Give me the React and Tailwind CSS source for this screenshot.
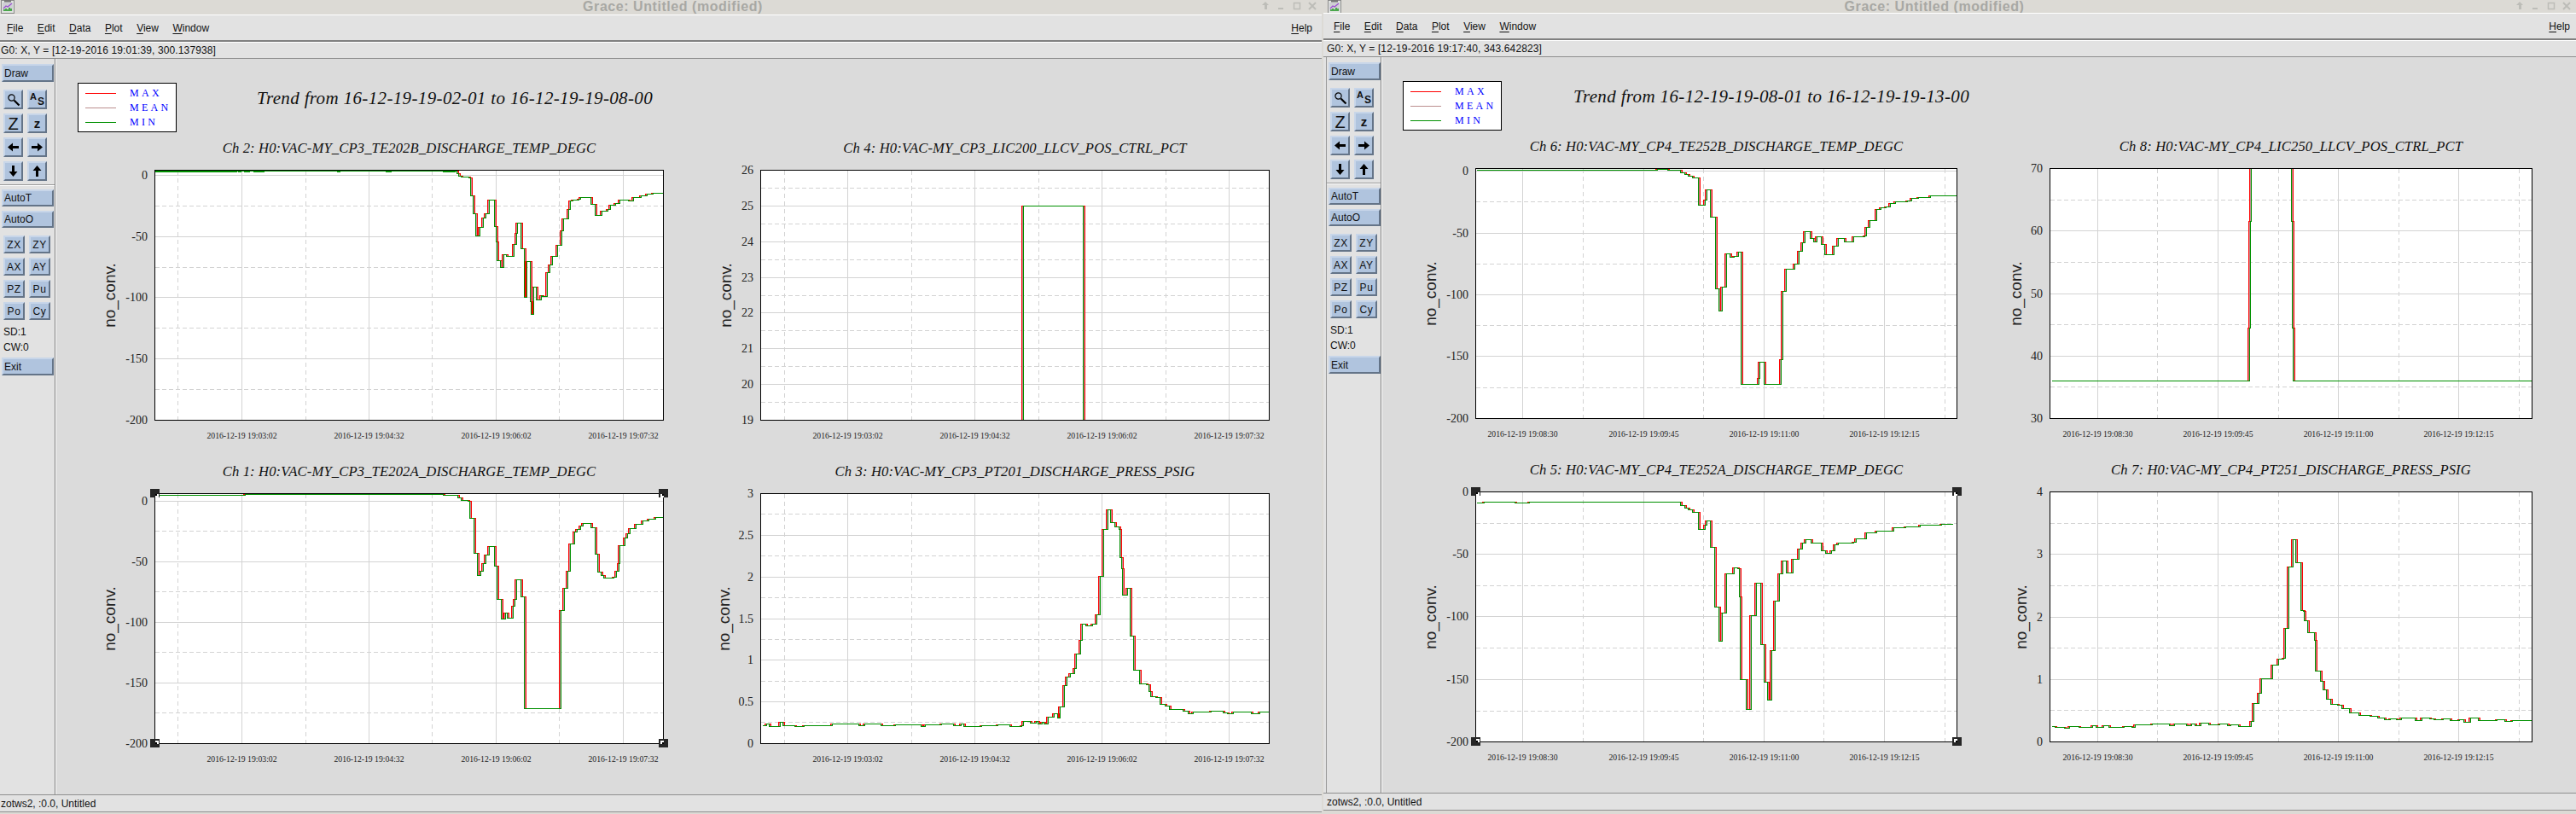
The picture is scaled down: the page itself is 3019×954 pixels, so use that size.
const SANS = "font-['Liberation_Sans',Arial,sans-serif]";
const SERIF = "font-['Liberation_Serif','Times_New_Roman',serif]";

const even = (n) => Array.from({ length: n + 1 }, (_, i) => Math.round((293 * i) / n));
const mids = (n) => Array.from({ length: n }, (_, i) => Math.round((293 * (i + 0.5)) / n));

const PLOTS = {
  ch2: {
    title: "Ch 2: H0:VAC-MY_CP3_TE202B_DISCHARGE_TEMP_DEGC",
    w: 596, sx: 2.063, zl: 250, zt: 148, yl: -53.5,
    vs: [102, 251, 400, 549], vd: [27, 177, 325, 474],
    labels: ["2016-12-19 19:03:02", "2016-12-19 19:04:32", "2016-12-19 19:06:02", "2016-12-19 19:07:32"],
    hs: [6, 78, 149, 221, 293], hd: [42, 114, 185, 257],
    yt: ["0", "-50", "-100", "-150", "-200"],
    blobs: [[250, 450], [452, 460], [465, 480], [488, 516], [690, 698], [808, 822], [946, 978]],
    data: "250:151 978:151 980:160 984:168 990:172 1010:176 1013:238 1020:300 1026:380 1037:348 1045:316 1050:300 1058:254 1068:254 1071:346 1075:400 1077:466 1086:490 1094:445 1100:452 1116:452 1118:408 1124:370 1126:334 1132:334 1135:425 1141:425 1143:595 1149:470 1157:610 1159:655 1166:560 1173:604 1182:604 1184:588 1187:593 1199:593 1200:508 1206:482 1212:452 1218:452 1224:412 1230:412 1234:360 1238:320 1245:320 1250:286 1254:256 1260:254 1275:250 1280:244 1302:244 1305:268 1312:268 1315:308 1322:306 1330:293 1345:285 1352:270 1365:264 1375:254 1395:255 1408:245 1425:238 1440:232 1455:228 1480:227",
  },
  ch1: {
    title: "Ch 1: H0:VAC-MY_CP3_TE202A_DISCHARGE_TEMP_DEGC",
    w: 596, sx: 2.063, zl: 250, zt: 115, yl: -53.5, handles: true,
    vs: [102, 251, 400, 549], vd: [27, 177, 325, 474],
    labels: ["2016-12-19 19:03:02", "2016-12-19 19:04:32", "2016-12-19 19:06:02", "2016-12-19 19:07:32"],
    hs: [9, 80, 151, 222, 293], hd: [44, 115, 186, 257],
    yt: ["0", "-50", "-100", "-150", "-200"],
    data: "250:121 465:121 468:119 550:119 552:118 946:118 948:121 978:121 982:130 990:138 1008:142 1012:202 1020:202 1022:325 1028:325 1030:403 1037:403 1038:388 1045:360 1050:332 1058:302 1068:302 1071:371 1076:371 1078:487 1086:487 1088:556 1096:556 1097:535 1102:552 1111:552 1116:510 1121:487 1125:418 1132:418 1135:478 1141:478 1143:871 1230:871 1232:525 1237:525 1240:448 1246:448 1249:388 1254:292 1260:292 1264:250 1272:240 1280:228 1285:220 1300:220 1305:236 1311:236 1315:328 1320:392 1328:404 1336:412 1350:412 1360:408 1367:388 1372:360 1375:298 1382:298 1386:270 1392:255 1400:238 1414:222 1430:210 1445:204 1460:200 1480:196",
  },
  ch4: {
    title: "Ch 4: H0:VAC-MY_CP3_LIC200_LLCV_POS_CTRL_PCT",
    w: 596, sx: 2.119, zl: 151, zt: 148, yl: -41,
    vs: [102, 251, 400, 549], vd: [28, 177, 326, 475],
    labels: ["2016-12-19 19:03:02", "2016-12-19 19:04:32", "2016-12-19 19:06:02", "2016-12-19 19:07:32"],
    hs: even(7), hd: mids(7),
    yt: ["26", "25", "24", "23", "22", "21", "20", "19"],
    data: "802:1027 803:274 949:274 953:1027",
  },
  ch3: {
    title: "Ch 3: H0:VAC-MY_CP3_PT201_DISCHARGE_PRESS_PSIG",
    w: 596, sx: 2.119, zl: 151, zt: 115, yl: -43,
    vs: [102, 251, 400, 549], vd: [28, 177, 326, 475],
    labels: ["2016-12-19 19:03:02", "2016-12-19 19:04:32", "2016-12-19 19:06:02", "2016-12-19 19:07:32"],
    hs: even(6), hd: [24, 73, 122, 171, 220, 268],
    yt: ["3", "2.5", "2", "1.5", "1", "0.5", "0"],
    data: "155:931 165:924 172:933 190:933 200:920 206:930 230:930 235:933 260:931 290:930 330:926 375:925 395:930 410:926 440:924 450:931 470:932 485:928 540:929 550:933 560:929 600:926 630:930 650:924 655:933 700:931 740:929 770:933 800:930 803:916 820:922 835:916 840:925 850:920 855:925 865:900 880:890 888:905 895:865 903:865 905:790 912:760 920:748 930:730 935:680 945:632 950:575 958:580 975:575 985:542 993:542 995:405 1001:405 1003:242 1011:242 1013:173 1018:173 1020:218 1030:232 1042:242 1044:340 1047:378 1050:472 1060:472 1062:448 1066:448 1068:615 1075:615 1077:735 1085:735 1092:785 1108:787 1115:810 1120:828 1132:832 1142:857 1155:862 1165:875 1182:875 1200:880 1212:888 1225:882 1260:884 1270:881 1300:885 1310:889 1325:884 1370:888 1390:883 1414:885",
  },
  ch6: {
    title: "Ch 6: H0:VAC-MY_CP4_TE252B_DISCHARGE_TEMP_DEGC",
    w: 564, sx: 2.24, zl: 247, zt: 143, yl: -53.5,
    vs: [55, 197, 338, 479], vd: [126, 267, 408, 550],
    labels: ["2016-12-19 19:08:30", "2016-12-19 19:09:45", "2016-12-19 19:11:00", "2016-12-19 19:12:15"],
    hs: [3, 76, 148, 220, 293], hd: [39, 112, 184, 257],
    yt: ["0", "-50", "-100", "-150", "-200"],
    data: "250:148 722:148 725:145 750:145 752:148 780:148 785:157 795:163 805:170 815:175 830:175 832:272 845:272 850:255 855:218 860:218 862:314 875:314 877:565 883:565 885:643 892:643 895:560 903:560 905:442 912:442 915:456 925:452 935:452 937:436 942:436 944:902 985:902 990:880 994:823 1002:823 1004:902 1045:902 1050:815 1053:575 1060:575 1063:497 1080:497 1085:478 1094:478 1097:435 1105:405 1112:365 1122:365 1125:390 1135:400 1142:383 1152:383 1155:410 1161:410 1163:445 1183:445 1188:415 1200:388 1212:388 1215:400 1230:400 1240:383 1268:380 1272:350 1282:325 1290:325 1300:288 1310:281 1325:278 1335:265 1350:260 1380:258 1392:247 1410:245 1440:240 1480:238 1510:235",
  },
  ch5: {
    title: "Ch 5: H0:VAC-MY_CP4_TE252A_DISCHARGE_TEMP_DEGC",
    w: 564, sx: 2.24, zl: 247, zt: 109, yl: -53.5, handles: true,
    vs: [55, 197, 338, 479], vd: [126, 267, 408, 550],
    labels: ["2016-12-19 19:08:30", "2016-12-19 19:09:45", "2016-12-19 19:11:00", "2016-12-19 19:12:15"],
    hs: [0, 73, 146, 220, 293], hd: [37, 110, 183, 257],
    yt: ["0", "-50", "-100", "-150", "-200"],
    data: "250:148 270:145 345:145 350:148 385:148 388:145 780:145 785:157 795:165 805:172 815:181 830:181 832:241 845:241 850:225 855:212 860:212 862:304 873:304 875:514 883:514 885:635 892:635 895:535 903:535 905:397 920:397 925:376 935:378 940:478 942:770 953:770 956:873 968:873 971:545 983:545 985:430 993:430 995:647 1002:647 1004:778 1012:778 1014:841 1022:841 1025:667 1030:667 1033:494 1042:494 1045:397 1050:397 1053:353 1060:353 1063:394 1072:394 1080:347 1092:347 1097:310 1105:290 1113:277 1122:277 1127:288 1150:288 1155:315 1165:326 1180:316 1190:294 1200:290 1240:287 1245:275 1262:273 1272:254 1298:254 1300:248 1322:246 1345:236 1375:232 1415:226 1470:222 1500:220",
  },
  ch8: {
    title: "Ch 8: H0:VAC-MY_CP4_LIC250_LLCV_POS_CTRL_PCT",
    w: 565, sx: 2.2757, zl: 167, zt: 143, yl: -40,
    vs: [56, 197, 338, 479], vd: [126, 268, 409, 550],
    labels: ["2016-12-19 19:08:30", "2016-12-19 19:09:45", "2016-12-19 19:11:00", "2016-12-19 19:12:15"],
    hs: [0, 73, 147, 220, 293], hd: [37, 110, 183, 256],
    yt: ["70", "60", "50", "40", "30"],
    data: "171:889 700:889 700:704 702:330 705:120 810:120 812:330 814:704 815:889 1452:889",
  },
  ch7: {
    title: "Ch 7: H0:VAC-MY_CP4_PT251_DISCHARGE_PRESS_PSIG",
    w: 565, sx: 2.2757, zl: 167, zt: 109, yl: -34,
    vs: [56, 197, 338, 479], vd: [126, 268, 409, 550],
    labels: ["2016-12-19 19:08:30", "2016-12-19 19:09:45", "2016-12-19 19:11:00", "2016-12-19 19:12:15"],
    hs: [0, 73, 147, 220, 293], hd: [37, 110, 183, 256],
    yt: ["4", "3", "2", "1", "0"],
    data: "171:935 180:938 205:940 220:933 245:937 275:937 280:930 290:938 310:932 325:938 365:933 385:937 395:928 440:925 480:925 485:930 500:926 530:932 545:926 555:932 570:923 590:928 620:926 640:932 650:928 670:934 700:934 703:917 710:917 712:853 722:853 725:817 732:767 750:767 762:718 775:718 778:697 790:693 795:590 803:590 805:373 813:373 815:277 821:277 823:358 834:358 836:525 842:530 846:563 852:563 854:605 865:605 872:630 875:740 885:740 888:775 895:805 905:838 915:857 933:860 945:870 965:885 990:895 1020:898 1040:905 1060:910 1075:907 1090:910 1105:903 1130:905 1140:912 1160:904 1180:906 1190:910 1215:907 1235:912 1260:911 1270:918 1290:905 1310:914 1340:912 1360:911 1380:917 1400:912 1452:913",
  },
};

function stepPath(p, off) {
  const pts = p.data.split(" ").map((s) => s.split(":").map(Number));
  const tx = (x) => Math.round((x - p.zl) / p.sx);
  const ty = (y) => Math.round((y - p.zt) / 3);
  let py = ty(pts[0][1]);
  let d = `M${tx(pts[0][0])} ${py}`;
  for (let i = 1; i < pts.length; i++) {
    const y = ty(pts[i][1]);
    const dir = y > py ? off : y < py ? -off : 0;
    d += `H${tx(pts[i][0]) + dir}V${y}`;
    py = y;
  }
  return d;
}

function Handle({ x, y, sx, sy }) {
  return (
    <g>
      <rect x={x - 5.5} y={y - 5.5} width="11" height="10" fill="#262626" />
      <rect x={sx > 0 ? x : x - 4} y={sy > 0 ? y : y - 4} width="4" height="4" fill="#ffffff" />
      <rect x={sx > 0 ? x : x - 2} y={sy > 0 ? y : y - 2} width="2" height="2" fill="#000000" />
    </g>
  );
}

function Plot({ id, svgW }) {
  const p = PLOTS[id];
  return (
    <div className="flex flex-col items-start">
      <div
        className={`${SERIF} h-[20px] ml-[81.5px] flex justify-center italic text-[16.6px] leading-[18px] tracking-[0.14px] text-[#111] whitespace-nowrap`}
        style={{ width: p.w }}
      >
        {p.title}
      </div>
      <svg width={svgW} height="335" className="block" shapeRendering="crispEdges">
        <defs>
          <clipPath id={`clip-${id}`}>
            <rect x="0" y="0" width={p.w} height="293" />
          </clipPath>
        </defs>
        <g transform="translate(81.5 14.5)">
          <rect x="0" y="0" width={p.w} height="293" fill="#ffffff" />
          {p.vs.map((x) => (
            <line key={x} x1={x} x2={x} y1="0" y2="293" stroke="#d3d3d3" strokeWidth="1" />
          ))}
          {p.vd.map((x) => (
            <line key={x} x1={x} x2={x} y1="0" y2="293" stroke="#d3d3d3" strokeWidth="1" strokeDasharray="5 4" />
          ))}
          {p.hs.map((y) => (
            <line key={y} x1="0" x2={p.w} y1={y} y2={y} stroke="#d3d3d3" strokeWidth="1" />
          ))}
          {p.hd.map((y) => (
            <line key={y} x1="0" x2={p.w} y1={y} y2={y} stroke="#d3d3d3" strokeWidth="1" strokeDasharray="5 3" />
          ))}
          <g clipPath={`url(#clip-${id})`} fill="none">
            <path d={stepPath(p, 1)} stroke="#bc8f8f" strokeWidth="1" />
            <path d={stepPath(p, 2)} stroke="#ff0000" strokeWidth="1" />
            <path d={stepPath(p, 0)} stroke="#009000" strokeWidth="1.6" />
            {(p.blobs || []).map(([a, b]) => (
              <rect key={a} x={(a - p.zl) / p.sx} y="0" width={(b - a) / p.sx} height="2" fill="#009000" />
            ))}
          </g>
          <rect x="0" y="0" width={p.w} height="293" fill="none" stroke="#000000" strokeWidth="1" />
          {p.hs.map((y, i) => (
            <text
              key={y}
              x="-8.5"
              y={y + 4.5}
              textAnchor="end"
              className={`${SERIF} text-[14px]`}
              fill="#222222"
            >
              {p.yt[i]}
            </text>
          ))}
          {p.vs.map((x, i) => (
            <text
              key={x}
              x={x}
              y="314"
              textAnchor="middle"
              className={`${SERIF} text-[9.7px]`}
              fill="#222222"
            >
              {p.labels[i]}
            </text>
          ))}
          <text
            transform={`translate(${p.yl + 6.5} 146.5) rotate(-90)`}
            textAnchor="middle"
            className={`${SANS} text-[19px]`}
            fill="#222222"
          >
            no_conv.
          </text>
          {p.handles && (
            <g>
              <Handle x={0} y={0} sx={1} sy={1} />
              <Handle x={p.w} y={0} sx={-1} sy={1} />
              <Handle x={0} y={293} sx={1} sy={-1} />
              <Handle x={p.w} y={293} sx={-1} sy={-1} />
            </g>
          )}
        </g>
      </svg>
    </div>
  );
}

function Legend() {
  const rows = [
    ["MAX", "bg-[#ff0000]"],
    ["MEAN", "bg-[#bc8f8f]"],
    ["MIN", "bg-[#009000]"],
  ];
  return (
    <div className="w-[116px] h-[58px] shrink-0 bg-white border-[1.5px] border-black flex flex-col justify-center pl-[8px]">
      {rows.map(([t, c]) => (
        <div key={t} className="flex items-center h-[17px]">
          <div className={`w-[36px] h-px ${c}`} />
          <span className={`${SERIF} ml-[16px] text-[12px] leading-none tracking-[3.3px] text-[#0000ff]`}>{t}</span>
        </div>
      ))}
    </div>
  );
}

const BTN =
  "bg-[#b0c4de] border-2 border-t-[#c8d6e9] border-l-[#c8d6e9] border-r-[#647488] border-b-[#647488] text-[#111] flex items-center";

function Wide({ children, short }) {
  return (
    <div className={`${BTN} w-[61px] ml-[1px] pl-[1px] text-[12px] ${short ? "h-[20px]" : "h-[21px]"}`}>{children}</div>
  );
}

function IconBtn({ children }) {
  return <div className={`${BTN} w-[23px] h-[23px] justify-center overflow-hidden`}>{children}</div>;
}

function Small({ children }) {
  return <div className={`${BTN} w-[25px] h-[21px] justify-center text-[12px] tracking-[0.6px]`}>{children}</div>;
}

const Arrow = ({ r }) => (
  <svg width="15" height="15" viewBox="0 0 15 15" style={{ transform: `rotate(${r}deg)` }}>
    <path d="M1 7.5 L7 2.5 V6 H14 V9 H7 V12.5 Z" fill="#000000" />
  </svg>
);

function Sidebar({ left }) {
  return (
    <div
      className={`w-[65px] shrink-0 h-full bg-[#e2e2e2] border-r border-[#808080] flex flex-col ${SANS} ${
        left ? "border-l border-l-[#9a9a9a] ml-[-1px]" : ""
      }`}
    >
      <div className="mt-[6px] ml-[1px]">
        <Wide>Draw</Wide>
      </div>
      <div className="mt-[9px] ml-[4px] grid grid-cols-[23px_23px] gap-x-[5px] gap-y-[5px]">
        <IconBtn>
          <svg width="16" height="16" viewBox="0 0 16 16" fill="none" stroke="#000" strokeWidth="1.2">
            <circle cx="5.5" cy="5.5" r="3.6" />
            <path d="M8.5 8.5 L14.5 14.5" strokeWidth="2.2" />
          </svg>
        </IconBtn>
        <IconBtn>
          <div className="relative w-[17px] h-[17px] font-bold leading-none">
            <span className="absolute left-0 top-0 text-[11px]">A</span>
            <span className="absolute right-0 top-[5px] text-[12px]">S</span>
          </div>
        </IconBtn>
        <IconBtn>
          <span className="text-[20px] leading-none">Z</span>
        </IconBtn>
        <IconBtn>
          <span className="text-[15px] font-bold leading-none">z</span>
        </IconBtn>
        <IconBtn><Arrow r={0} /></IconBtn>
        <IconBtn><Arrow r={180} /></IconBtn>
        <IconBtn><Arrow r={-90} /></IconBtn>
        <IconBtn><Arrow r={90} /></IconBtn>
      </div>
      <div className="mt-[4px] h-[2px] bg-[#9a9a9a] border-b border-white" />
      <div className="mt-[4px] ml-[1px]">
        <Wide short>AutoT</Wide>
      </div>
      <div className="mt-[5px] ml-[1px]">
        <Wide short>AutoO</Wide>
      </div>
      <div className="mt-[9px] ml-[4px] grid grid-cols-[25px_25px] gap-x-[5px] gap-y-[5px]">
        {["ZX", "ZY", "AX", "AY", "PZ", "Pu", "Po", "Cy"].map((t) => (
          <Small key={t}>{t}</Small>
        ))}
      </div>
      <div className="mt-[5px] ml-[4px] text-[12px] leading-[18px] text-[#111]">
        <div>SD:1</div>
        <div>CW:0</div>
      </div>
      <div className="mt-[3px] ml-[1px]">
        <Wide>Exit</Wide>
      </div>
    </div>
  );
}

function AppIcon() {
  return (
    <svg width="17" height="16" viewBox="0 0 17 16" className="shrink-0">
      <rect x="0.5" y="0.5" width="15" height="15" fill="#dfe3df" stroke="#8c8c8c" />
      <rect x="4" y="0" width="8" height="2.5" fill="#777777" />
      <rect x="2" y="3" width="12" height="10" fill="#cfcfd4" />
      <path d="M3 10 L6 7 L8 8 L13 4" stroke="#9a4fd0" strokeWidth="1.2" fill="none" />
      <path d="M4 13 V11 M6 13 V10 M8 13 V11 M10 13 V9 M12 13 V10" stroke="#1f9a1f" strokeWidth="1.5" />
    </svg>
  );
}

function Controls() {
  return (
    <svg width="70" height="12" viewBox="0 0 70 12" className="shrink-0 mt-[1px]" fill="#bdbdb8" stroke="#bdbdb8">
      <path d="M4 1 L8 5 H6 V10 H3 V5 H0 Z" stroke="none" />
      <rect x="19" y="8" width="6" height="2" stroke="none" />
      <rect x="37.5" y="2.5" width="7" height="7" fill="none" strokeWidth="1.5" />
      <path d="M55 2 L63 10 M63 2 L55 10" strokeWidth="2" fill="none" />
    </svg>
  );
}

function Window({ cfg }) {
  return (
    <div className={`${cfg.box} ${SANS} flex flex-col text-[#111]`}>
      <div className={`${cfg.titleH} shrink-0 bg-[#dcdad5] flex items-start overflow-hidden ${cfg.titlePl}`}>
        <AppIcon />
        <div className={`flex-1 text-center font-bold text-[16px] leading-[15px] tracking-[0.55px] text-[#a8a8a4] ${cfg.titleShift}`}>
          Grace: Untitled (modified)
        </div>
        <Controls />
      </div>
      <div className={`h-[32px] shrink-0 bg-[#e2e2e2] border-t border-t-white border-b-2 border-b-[#808080] flex items-center text-[12px] gap-[16.5px] ${cfg.pl8}`}>
        {["File", "Edit", "Data", "Plot", "View", "Window"].map((m) => (
          <span key={m}>
            <span className="underline underline-offset-2">{m[0]}</span>
            {m.slice(1)}
          </span>
        ))}
        <span className={`ml-auto ${cfg.helpMr}`}>
          <span className="underline underline-offset-2">H</span>elp
        </span>
      </div>
      <div className={`h-[20px] shrink-0 bg-[#e2e2e2] border-t border-t-white border-b border-b-[#8f8f8f] flex items-center text-[12px] tracking-[0.12px] whitespace-nowrap ${cfg.pl1}`}>
        {cfg.coords}
      </div>
      <div className={`h-[862px] shrink-0 flex bg-[#e2e2e2] overflow-hidden ${cfg.bodyPl}`}>
        <Sidebar left={cfg.frame} />
        <div className="flex-1 h-full bg-[#dbdbdb] border-l border-l-white overflow-hidden">
          <div className={`mt-[28px] flex items-start ${cfg.headMl}`}>
            <Legend />
            <div className={`${SERIF} ${cfg.trendMl} mt-[6px] italic text-[21px] leading-[24px] tracking-[0.36px] text-[#111] whitespace-nowrap`}>
              {cfg.trend}
            </div>
          </div>
          <div className={`mt-[10px] grid gap-y-[24px] ${cfg.grid}`}>
            {cfg.plots.map((id) => (
              <Plot key={id} id={id} svgW={cfg.svgW} />
            ))}
          </div>
        </div>
      </div>
      <div className={`h-[21px] shrink-0 bg-[#e2e2e2] border-y border-y-[#8f8f8f] flex items-center text-[12px] ${cfg.pl1}`}>
        zotws2, :0.0, Untitled
      </div>
    </div>
  );
}

const W1 = {
  box: "w-[1549px] shrink-0 h-[954px]",
  titleH: "h-[17px]",
  titlePl: "pl-[1px]",
  titleShift: "pl-[80px]",
  helpMr: "mr-[11px]",
  pl8: "pl-[8px]",
  pl1: "pl-[1px]",
  bodyPl: "pl-0",
  headMl: "ml-[25px]",
  trendMl: "ml-[94px]",
  grid: "ml-[34px] grid-cols-[690px_690px] gap-x-[20px]",
  svgW: 690,
  frame: false,
  coords: "G0: X, Y = [12-19-2016 19:01:39, 300.137938]",
  trend: "Trend from 16-12-19-19-02-01 to 16-12-19-19-08-00",
  plots: ["ch2", "ch4", "ch1", "ch3"],
};

const W2 = {
  box: "flex-1 h-[954px]",
  titleH: "h-[15px]",
  titlePl: "pl-[5px]",
  titleShift: "pl-[12px]",
  helpMr: "mr-[7px]",
  pl8: "pl-[12px]",
  pl1: "pl-[4px]",
  bodyPl: "pl-[4px]",
  headMl: "ml-[24px]",
  trendMl: "ml-[84px]",
  grid: "ml-[28px] grid-cols-[660px_660px] gap-x-[13px]",
  svgW: 660,
  frame: true,
  coords: "G0: X, Y = [12-19-2016 19:17:40, 343.642823]",
  trend: "Trend from 16-12-19-19-08-01 to 16-12-19-19-13-00",
  plots: ["ch6", "ch8", "ch5", "ch7"],
};

export default function App() {
  return (
    <div className="w-[3019px] h-[954px] bg-[#dcdad5] flex gap-[2px] overflow-hidden">
      <Window cfg={W1} />
      <Window cfg={W2} />
    </div>
  );
}
